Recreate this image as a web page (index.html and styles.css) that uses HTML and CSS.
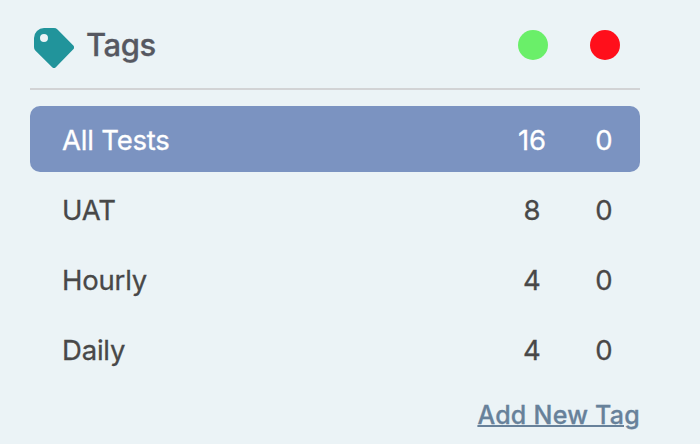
FILE: index.html
```html
<!DOCTYPE html>
<html lang="en">

<head>
  <meta charset="UTF-8">
  <meta name="viewport" content="width=device-width, initial-scale=1.0">
  <title>Tags</title>
  <link rel="stylesheet" href="styles.css">
</head>

<body>
  <div class="tags">
    <div class="tags-header">
      <svg class="tag-icon" viewBox="0 0 40 40" width="40" height="40">
        <path fill="#21949b" fill-rule="evenodd" d="M10 0H20Q22 0 23.500 1.400L39.300 17.600Q41 19.500 39.300 21.300L21.800 39.200Q20 41 18.200 39.200L1.300 22.500Q0 21.200 0 19V10A10 10 0 0 1 10 0ZM10 6A4 4 0 1 0 10 14A4 4 0 1 0 10 6Z"/>
      </svg>
      <h2>Tags</h2>
      <span class="dot passed"></span>
      <span class="dot failed"></span>
    </div>

    <ul class="tag-list">
      <li class="selected"><span class="name">All Tests</span><span class="count">16</span><span class="count">0</span></li>
      <li><span class="name">UAT</span><span class="count">8</span><span class="count">0</span></li>
      <li><span class="name">Hourly</span><span class="count">4</span><span class="count">0</span></li>
      <li><span class="name">Daily</span><span class="count">4</span><span class="count">0</span></li>
    </ul>

    <a class="add-tag" href="#">Add New Tag</a>
  </div>
</body>

</html>
```
FILE: styles.css
```css
body {
  margin: 0;
  background-color: #ebf3f6;
  font-family: Inter, sans-serif;
  color: #484848;
}

.tags {
  width: 610px;
  margin-left: 30px;
}

.tags-header {
  display: flex;
  align-items: center;
  box-sizing: border-box;
  height: 90px;
  padding: 2px 20px 0 4px;
  border-bottom: 2px solid #d2d3d5;
}

.tag-icon {
  margin-top: 6px;
}

.tags-header h2 {
  flex: 1;
  margin: 0 0 1px 12px;
  font-size: 31px;
  font-weight: 500;
  letter-spacing: -0.4px;
  -webkit-text-stroke: 0.3px;
  color: #565861;
}

.dot {
  width: 30px;
  height: 30px;
  border-radius: 50%;
}

.passed {
  background-color: #6aef69;
}

.failed {
  margin-left: 42px;
  background-color: #ff0f1b;
}

.tag-list {
  margin: 16px 0 0;
  padding: 0;
  list-style: none;
}

.tag-list li {
  display: flex;
  align-items: center;
  box-sizing: border-box;
  height: 66px;
  margin-bottom: 4px;
  padding-top: 2px;
  border-radius: 10px;
  font-size: 27.5px;
  -webkit-text-stroke: 0.3px;
}

.tag-list .selected {
  background-color: #7b93c1;
  color: #fff;
}

.name {
  flex: 1;
  padding-left: 32px;
  letter-spacing: -0.2px;
}

.count {
  width: 72px;
  text-align: center;
}

.add-tag {
  display: block;
  margin-top: 18px;
  font-size: 25px;
  font-weight: 500;
  line-height: 30px;
  letter-spacing: 0.25px;
  text-align: right;
  text-decoration-thickness: 2px;
  -webkit-text-stroke: 0.3px;
  color: #67819a;
}
```
